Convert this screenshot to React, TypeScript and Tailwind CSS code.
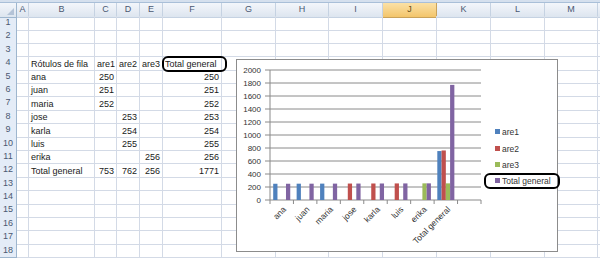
import React from 'react';

const COLS = ['A', 'B', 'C', 'D', 'E', 'F', 'G', 'H', 'I', 'J', 'K', 'L', 'M'];

// cell contents by row number: [B, C, D, E, F]
const DATA: Record<number, (string | number)[]> = {
  4: ['Rótulos de fila', 'are1', 'are2', 'are3', 'Total general'],
  5: ['ana', 250, '', '', 250],
  6: ['juan', 251, '', '', 251],
  7: ['maria', 252, '', '', 252],
  8: ['jose', '', 253, '', 253],
  9: ['karla', '', 254, '', 254],
  10: ['luis', '', 255, '', 255],
  11: ['erika', '', '', 256, 256],
  12: ['Total general', 753, 762, 256, 1771],
};

const SERIES = [
  { name: 'are1', color: '#4f81bd' },
  { name: 'are2', color: '#c0504d' },
  { name: 'are3', color: '#9bbb59' },
  { name: 'Total general', color: '#8064a2' },
];

const CATS: { label: string; v: number[] }[] = [
  { label: 'ana', v: [250, 0, 0, 250] },
  { label: 'juan', v: [251, 0, 0, 251] },
  { label: 'maria', v: [252, 0, 0, 252] },
  { label: 'jose', v: [0, 253, 0, 253] },
  { label: 'karla', v: [0, 254, 0, 254] },
  { label: 'luis', v: [0, 255, 0, 255] },
  { label: 'erika', v: [0, 0, 256, 256] },
  { label: 'Total general', v: [753, 762, 256, 1771] },
];

const gridCols =
  'grid grid-cols-[17px_12px_66px_22px_23px_23px_59px_54px_53px_54px_54px_54px_54px_53px_1fr]';

function Chart() {
  const x0 = 33;
  const x1 = 244;
  const yTop = 10;
  const yBase = 140;
  const catW = (x1 - x0) / 9;
  const barW = catW / 5.5;
  const ticks = [0, 200, 400, 600, 800, 1000, 1200, 1400, 1600, 1800, 2000];
  const yOf = (v: number) => yBase - (v / 2000) * (yBase - yTop);

  return (
    <svg width="322" height="193" className="block" fontFamily="'Liberation Sans', Arial, sans-serif">
      {ticks.map((t) => (
        <g key={t}>
          <line x1={x0 - 5} x2={x1} y1={yOf(t)} y2={yOf(t)} stroke="#8a8a8a" strokeWidth="1" />
          <text x={24} y={yOf(t) + 3} fontSize="8" textAnchor="end" fill="#333">
            {t}
          </text>
        </g>
      ))}
      <line x1={x0} x2={x0} y1={yTop} y2={yBase} stroke="#8a8a8a" />
      {Array.from({ length: 10 }).map((_, i) => (
        <line key={i} x1={x0 + i * catW} x2={x0 + i * catW} y1={yBase} y2={yBase + 4} stroke="#8a8a8a" />
      ))}
      {CATS.map((c, i) => {
        const left = x0 + i * catW;
        const lx = left + catW / 2 + 5;
        const ly = yBase + 10;
        return (
          <g key={c.label}>
            {c.v.map((v, j) =>
              v > 0 ? (
                <rect
                  key={j}
                  x={left + 0.75 * barW + j * barW}
                  y={yOf(v)}
                  width={barW}
                  height={yBase - yOf(v)}
                  fill={SERIES[j].color}
                />
              ) : null
            )}
            <text x={lx} y={ly} fontSize="8.5" textAnchor="end" fill="#333" transform={`rotate(-45 ${lx} ${ly})`}>
              {c.label}
            </text>
          </g>
        );
      })}
      {SERIES.map((s, i) => {
        const cy = [72, 89, 105, 121][i];
        return (
          <g key={s.name}>
            <rect x={258} y={cy - 3} width={5} height={5} fill={s.color} />
            <text x={265} y={cy + 3} fontSize="8.5" fill="#333">
              {s.name}
            </text>
          </g>
        );
      })}
    </svg>
  );
}

export default function App() {
  return (
    <div className="relative w-[600px] h-[261px] overflow-hidden bg-white font-['Liberation_Sans',Arial,sans-serif] text-[9px] text-[#1a1a1a]">
      {/* ribbon edge */}
      <div className="h-[3px] bg-[#d5e0ee] border-b border-[#a9bfd8]" />

      {/* column headers */}
      <div className={`${gridCols} h-[13px]`}>
        <div className="relative bg-linear-to-b from-[#f3f6fb] to-[#dde5ef] border-r border-b border-[#9eb6ce]">
          <div className="absolute right-[2px] bottom-[2px] w-0 h-0 border-l-[7px] border-l-transparent border-b-[7px] border-b-[#b4c3d7]" />
        </div>
        {COLS.map((c) => (
          <div
            key={c}
            className={
              c === 'J'
                ? 'flex items-center justify-center bg-linear-to-b from-[#fbe1a6] to-[#f3c56a] border-r border-b border-[#c9a25a] text-[#6b4e16]'
                : 'flex items-center justify-center bg-linear-to-b from-[#f3f6fb] to-[#dde5ef] border-r border-b border-[#c5d2e2] text-[#4a5872]'
            }
          >
            {c}
          </div>
        ))}
        <div className="bg-linear-to-b from-[#f3f6fb] to-[#dde5ef] border-b border-[#c5d2e2]" />
      </div>

      {/* rows */}
      {Array.from({ length: 18 }).map((_, r) => {
        const n = r + 1;
        const d = DATA[n];
        return (
          <div key={n} className={`${gridCols} h-[13.4px]`}>
            <div className="flex items-center justify-center bg-[#e4ecf7] border-r border-b border-[#9eb6ce] text-[#4a5872]">
              {n}
            </div>
            {COLS.map((c, ci) => {
              let content: string | number = '';
              let right = false;
              if (d && ci >= 1 && ci <= 5) {
                content = d[ci - 1];
                right = typeof content === 'number';
              }
              return (
                <div
                  key={c}
                  className={`flex items-end pb-[1px] border-r border-b border-[#d3dae6] whitespace-nowrap leading-none ${
                    right ? 'justify-end pr-[2px]' : 'pl-[2px]'
                  }`}
                >
                  {content}
                </div>
              );
            })}
            <div className="border-b border-[#d3dae6]" />
          </div>
        );
      })}

      {/* callout on F4 */}
      <div className="absolute left-[162px] top-[56px] w-[65px] h-[16px] border-2 border-black rounded-[6px]" />

      {/* chart */}
      <div className="absolute left-[236px] top-[59px] w-[322px] h-[193px] bg-white border border-[#8c8c8c]">
        <Chart />
      </div>

      {/* callout on legend */}
      <div className="absolute left-[484px] top-[173px] w-[76px] h-[16px] border-2 border-black rounded-[6px]" />
    </div>
  );
}
